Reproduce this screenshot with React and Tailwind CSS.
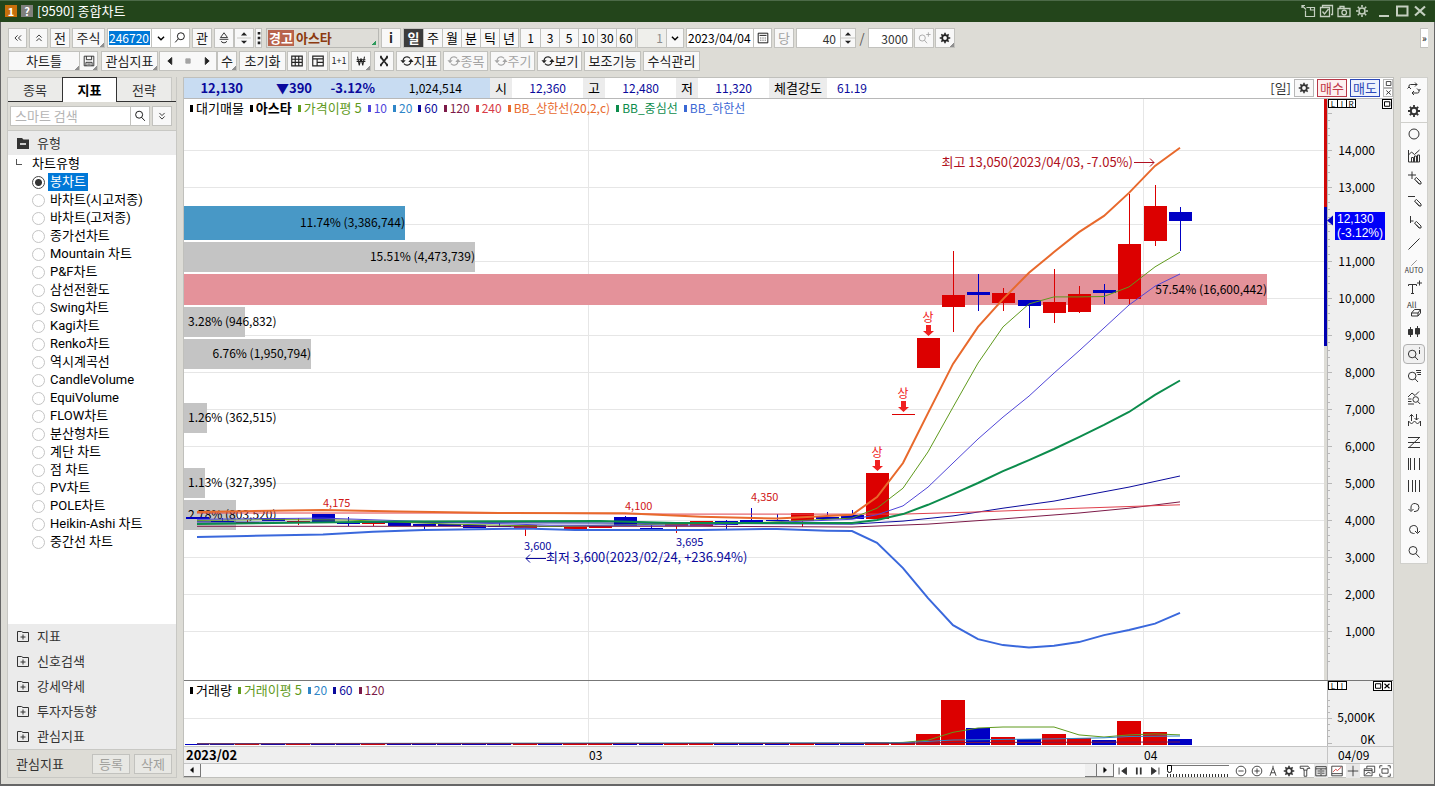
// 종합차트 화면 - 툴바, 지표 트리, 봉차트, 거래량 차트
import { useState } from 'react';

const PERIODS = ['일', '주', '월', '분', '틱', '년'];
const MINUTES = ['1', '3', '5', '10', '30', '60'];

const CHART_TYPES = [
  '봉차트', '바차트(시고저종)', '바차트(고저종)', '종가선차트', 'Mountain 차트', 'P&F차트', '삼선전환도',
  'Swing차트', 'Kagi차트', 'Renko차트', '역시계곡선', 'CandleVolume', 'EquiVolume', 'FLOW차트',
  '분산형차트', '계단 차트', '점 차트', 'PV차트', 'POLE차트', 'Heikin-Ashi 차트', '중간선 차트',
];

const SECTIONS = ['지표', '신호검색', '강세약세', '투자자동향', '관심지표'];

const PRICE_LEGEND = [
  { name: '대기매물', color: '#000000' },
  { name: '아스타', color: '#000000', bold: true },
  { name: '가격이평 5', color: '#5f9a1c' },
  { name: '10', color: '#4f46dc', num: true },
  { name: '20', color: '#2f86c8', num: true },
  { name: '60', color: '#0a0a9c', num: true },
  { name: '120', color: '#7c1a48', num: true },
  { name: '240', color: '#d83c48', num: true },
  { name: 'BB_상한선(20,2,c)', color: '#e8692c', num: true },
  { name: 'BB_중심선', color: '#0c8c4c', num: true },
  { name: 'BB_하한선', color: '#3a68d4', num: true },
];

const VOLUME_LEGEND = [
  { name: '거래량', color: '#000000' },
  { name: '거래이평 5', color: '#5f9a1c' },
  { name: '20', color: '#2f86c8', num: true },
  { name: '60', color: '#0a0a9c', num: true },
  { name: '120', color: '#7c1a48', num: true },
];

// [고가, 몸통 위, 몸통 아래, 저가, 상승 여부]
const CANDLES = [
  [4080, 4080, 4030, 4030, 0], [4060, 3980, 3950, 3950, 0], [4000, 3950, 3920, 3920, 1], [4050, 4050, 3970, 3970, 0],
  [4060, 3970, 3940, 3860, 1], [4175, 4160, 3930, 3930, 0], [4080, 3930, 3900, 3840, 0], [3930, 3930, 3890, 3840, 1],
  [3970, 3970, 3840, 3840, 0], [3890, 3890, 3850, 3760, 0], [3900, 3880, 3850, 3850, 0], [3870, 3870, 3790, 3790, 0],
  [3920, 3840, 3810, 3810, 0], [3860, 3860, 3780, 3560, 1], [3850, 3840, 3800, 3800, 0], [3810, 3810, 3750, 3750, 1],
  [3830, 3830, 3780, 3780, 1], [4100, 4090, 3830, 3830, 0], [3870, 3790, 3740, 3740, 0], [3950, 3890, 3830, 3650, 1],
  [3960, 3960, 3850, 3850, 1], [3990, 3980, 3860, 3740, 0], [4330, 4010, 3940, 3940, 0], [4160, 4010, 3970, 3970, 0],
  [4190, 4190, 3980, 3810, 1], [4220, 4080, 4030, 4030, 0], [4270, 4140, 4030, 4030, 0], [5270, 5270, 4030, 4030, 1],
  [6860, 6860, 6840, 6840, 1], [8920, 8920, 8110, 8110, 1], [11270, 10080, 9760, 9080, 1], [10650, 10160, 10080, 9650, 0],
  [10270, 10140, 9870, 9650, 1], [9950, 9950, 9780, 9190, 0], [10780, 9890, 9600, 9320, 1], [10320, 10110, 9620, 9590, 1],
  [10380, 10220, 10140, 9840, 0], [12810, 11460, 9970, 9810, 1], [13050, 12490, 11540, 11410, 1], [12460, 12320, 12080, 11270, 0],
];

// [봉 번호, 가격]
const LINES = [
  {
    color: '#0a0a9c', width: 1,
    points: [[0, 3950], [8, 3930], [16, 3920], [26, 3890], [28, 3970], [30, 4110], [32, 4320], [34, 4510], [37, 4890], [39, 5190]],
  },
  {
    color: '#7c1a48', width: 1,
    points: [[0, 3830], [20, 3830], [26, 3810], [29, 3890], [32, 4030], [35, 4190], [37, 4320], [39, 4490]],
  },
  {
    color: '#e0404c', width: 1,
    points: [[0, 4190], [10, 4190], [19, 4160], [28, 4160], [31, 4220], [35, 4320], [39, 4410]],
  },
  {
    color: '#5f9a1c', width: 1,
    points: [[0, 3990], [3, 4010], [6, 4000], [10, 3890], [14, 3830], [18, 3880], [22, 3920], [26, 4050], [27, 4320], [28, 4860], [29, 5840], [30, 7050], [31, 8240], [32, 9220], [33, 9840], [34, 10030], [35, 10030], [36, 10040], [37, 10300], [38, 10840], [39, 11240]],
  },
  {
    color: '#5046d8', width: 1,
    points: [[0, 4020], [5, 4050], [9, 3960], [14, 3860], [20, 3860], [26, 4020], [27, 4140], [28, 4380], [29, 4890], [30, 5540], [31, 6190], [32, 6780], [33, 7350], [34, 7970], [35, 8570], [36, 9190], [37, 9810], [38, 10320], [39, 10650]],
  },
  {
    color: '#0c8c4c', width: 2,
    points: [[0, 3890], [3, 3920], [8, 3960], [16, 3970], [19, 3920], [26, 3920], [27, 4000], [28, 4160], [29, 4410], [30, 4700], [31, 5000], [32, 5320], [33, 5620], [34, 5920], [35, 6240], [36, 6570], [37, 6920], [38, 7380], [39, 7770]],
  },
  {
    color: '#e8692c', width: 2,
    points: [[0, 4220], [5, 4270], [8, 4230], [12, 4190], [17, 4180], [20, 4090], [23, 4040], [25, 4110], [26, 4140], [27, 4620], [28, 5540], [29, 6890], [30, 8220], [31, 9220], [32, 9970], [33, 10680], [34, 11240], [35, 11780], [36, 12220], [37, 12840], [38, 13570], [39, 14060]],
  },
  {
    color: '#3a68dc', width: 2,
    points: [[0, 3540], [2, 3570], [5, 3610], [7, 3680], [9, 3730], [13, 3770], [15, 3730], [20, 3730], [23, 3760], [25, 3710], [26, 3700], [27, 3380], [28, 2700], [29, 1890], [30, 1160], [31, 780], [32, 620], [33, 550], [34, 600], [35, 700], [36, 890], [37, 1030], [38, 1200], [39, 1490]],
  },
];

// 매물대 막대
const PROFILE = [
  { y: 107, h: 34, w: 221, fill: '#4898c6', label: '11.74% (3,386,744)' },
  { y: 143, h: 30, w: 291, fill: '#c4c4c4', label: '15.51% (4,473,739)' },
  { y: 175, h: 31, w: 1083, fill: '#e4929a', label: '57.54% (16,600,442)' },
  { y: 208, h: 30, w: 61, fill: '#c4c4c4', label: '3.28% (946,832)' },
  { y: 240, h: 30, w: 127, fill: '#c4c4c4', label: '6.76% (1,950,794)' },
  { y: 304, h: 30, w: 23, fill: '#c4c4c4', label: '1.26% (362,515)' },
  { y: 369, h: 30, w: 21, fill: '#c4c4c4', label: '1.13% (327,395)' },
  { y: 401, h: 30, w: 52, fill: '#c4c4c4', label: '2.78% (803,520)' },
];

// 거래량 (단위: 천주)
const VOLUMES = [
  150, 260, 200, 180, 210, 400, 220, 180, 240, 160, 150, 170, 140, 260, 150, 140, 180, 420, 200, 220,
  190, 180, 420, 230, 380, 260, 350, 600, 560, 2000, 8500, 3300, 1500, 1100, 2000, 1300, 850, 4500, 2400, 1050,
];

const VOLUME_LINES = [
  { color: '#5f9a1c', points: [[0, 260], [27, 350], [28, 500], [29, 900], [30, 2400], [31, 3200], [32, 3400], [34, 3400], [35, 1900], [36, 1500], [37, 1900], [38, 2100], [39, 1900]] },
  { color: '#2f86c8', points: [[0, 260], [28, 420], [30, 950], [34, 1150], [36, 1350], [37, 1600], [39, 1700]] },
  { color: '#7c1a48', points: [[0, 220], [28, 300], [30, 480], [39, 560]] },
];

const UP = '#dc0000';
const DOWN = '#0000c4';

const xAt = (i) => Math.round(13 + 25.2 * i);
const yAt = (price) => 569 - price * 0.037;
const vAt = (k) => 64 - k * 0.0053;
const toPoints = (points, scale) => points.map(([i, v]) => `${xAt(i)},${scale(v).toFixed(1)}`).join(' ');

const GEAR = (
  <>
    <circle cx="8" cy="8" r="3.2" fill="none" strokeWidth="2" />
    <path d="M8 2v2.5M8 11.5V14M2 8h2.5M11.5 8H14M3.8 3.8l1.7 1.7M10.5 10.5l1.7 1.7M12.2 3.8l-1.7 1.7M5.5 10.5l-1.7 1.7" strokeWidth="1.8" />
  </>
);
const LENS = <path d="M11 6.5a4 4 0 1 1-8 0a4 4 0 0 1 8 0M9.8 9.5L13.5 13.5" />;
const PENCIL = <path d="M8.5 9l2-1.5l4.5 4.5v2h-2zM10 10.5l3.5 3.5" />;
const CYCLE = (
  <>
    <path d="M3.5 7.5a4.5 4.5 0 0 1 8-2.500M12.5 8.5a4.5 4.5 0 0 1-8 2.500" strokeWidth="1.3" />
    <path d="M.5 7h6l-3 3.500zM9.500 9h6l-3-3.500z" fill="currentColor" stroke="none" />
  </>
);

const ICONS = {
  gear: GEAR,
  lens: LENS,
  cycle: CYCLE,
  dblLeft: <path d="M7.5 5L4.5 8l3 3M11.5 5l-3 3l3 3" />,
  dblUp: <path d="M5 7.5l3-3l3 3M5 11.5l3-3l3 3" />,
  dblDown: <path d="M5 4.5l3 3l3-3M5 8.5l3 3l3-3" />,
  down: <path d="M4.5 6.5L8 10l3.5-3.5" strokeWidth="1.6" />,
  lensLeft: <path d="M13 6a4 4 0 1 1-8 0a4 4 0 0 1 8 0M6 9L2.5 13" />,
  lensPlus: <path d="M9.5 8a3.5 3.5 0 1 1-7 0a3.5 3.5 0 0 1 7 0M8.5 10.5l3 3.5M10.5 4h5M13 1.5v5" />,
  spin: <><path d="M0 8h16" stroke="#c2c2be" /><path d="M4.500 5L8 1.500L11.500 5zM4.500 11L8 14.500L11.500 11z" fill="currentColor" stroke="none" /></>,
  balloon: <path d="M8 2L4 7.5h8zM3 9.5h10M5 11.5a3 2 0 1 0 6 0" />,
  dots: <path d="M8 1v3M8 6.500v3M8 12v3" strokeWidth="3" />,
  save: <path d="M2.5 2.5h11v11h-11zM5 2.5v4h6v-4M4.5 13.5v-4h7v4M6 11.5h4" />,
  left: <path d="M10 4v8L5.5 8z" fill="currentColor" />,
  right: <path d="M6 4v8L10.5 8z" fill="currentColor" />,
  stop: <path d="M5.5 5.5h5v5h-5z" fill="currentColor" />,
  grid: <path d="M2 2.5h12v11H2zM2 6h12M2 9.5h12M6 2.5v11M10 2.5v11" strokeWidth="1.3" />,
  panes: <path d="M2 2.5h12v11H2zM2 5.5h12M7 5.5v8M7 9.5h7" strokeWidth="1.3" />,
  won: <path d="M4 3l2 10l2-8l2 8l2-10M3 6.5h10M3 8.5h10" strokeWidth="1.2" />,
  candleX: <path d="M4.5 2.5c0 3 7 8 7 11M11.5 2.5c0 3-7 8-7 11M4.5 2v3M11.5 2v3M4.5 11v3M11.5 11v3" strokeWidth="2" />,
  calendar: <path d="M2.5 2.5h11v11h-11zM4 5h8M5 8h1M7.5 8h1M10 8h1M5 10.5h1M7.5 10.5h1M10 10.5h1" />,
  detach: <path d="M6.5 4.5h8v9h-9v-6M10.5 4.5v2.5h4M2 5V2.5h3M2 2.5l4 4" strokeWidth="1.2" />,
  checks: <path d="M4.5 4V2.5h10v9H13M2.5 4.5h9v9h-9zM4.5 8.5l2 2.5l4-5" strokeWidth="1.3" />,
  camera: <path d="M2 5.5h12v8H2zM4 5.5V3.5h4v2M10.5 9.5a2.3 2.3 0 1 1-4.6 0a2.3 2.3 0 0 1 4.6 0" strokeWidth="1.3" />,
  sun: <path d="M11 8a3 3 0 1 1-6 0a3 3 0 0 1 6 0M8 2v2M8 12v2M2 8h2M12 8h2M3.8 3.8l1.4 1.4M10.8 10.8l1.4 1.4M12.2 3.8l-1.4 1.4M5.2 10.8l-1.4 1.4" strokeWidth="1.6" />,
  minus: <path d="M3 13h10" strokeWidth="2" />,
  square: <path d="M3 3.5h10.5v9H3z" strokeWidth="2" />,
  close: <path d="M3 3.5l10 9M13 3.5l-10 9" strokeWidth="2.2" />,
  folderMinus: <><path d="M2 3h5l1.5 1.5H14V14H2z" fill="currentColor" stroke="none" /><path d="M5 9h6" stroke="#fff" strokeWidth="1.5" /></>,
  folderPlus: <path d="M2.5 3.5h4l1.500 1h5.500v9h-11zM5.500 9h5M8 6.500v5" />,
  rotate: <path d="M3 7V5q0-1.500 1.500-1.500H11M9 1.500l2 2l-2 2M13 8.500v2q0 1.500-1.500 1.500H6M8 10l-2 2l2 2M1.500 7.500L3 6l2 2M14.500 8L13 9.500l-2-2" />,
  circle: <path d="M13 8a5 5 0 1 1-10 0a5 5 0 0 1 10 0" />,
  chartBars: <path d="M2.5 2v12h11M2.5 7l3-3l3 2.5l5-4.5M5.5 14V9.5h2V14M8.5 14V8h2v6M11.5 14V7h2v7" />,
  crossPen: <>{PENCIL}<path d="M2 5h8M6 1.5v7.500" /></>,
  barPen: <>{PENCIL}<path d="M2 4.5h7" /></>,
  stemPen: <>{PENCIL}<path d="M4.5 2v7M4.5 7h3" /></>,
  slash: <path d="M2.5 13.5l11-11" />,
  textPlus: <path d="M2.5 6V4.5h8V6M6.5 4.5v9M5 13.5h3M11 3h5M13.5.5v5" />,
  eraser: <path d="M5.5 11l3-3.5h6L12 11zM5.5 11v3H12v-3M12 14l2.5-3V7.5" />,
  candles: <path d="M4.5 3v10M11.5 2v11M2.5 5.5h4v5h-4zM9.5 4.5h4v5.5h-4z" fill="currentColor" />,
  lensInfo: <path d="M10 8a3.8 3.8 0 1 1-7.6 0a3.8 3.8 0 0 1 7.6 0M9 10.8l3 3.2M13.5 1.5v1M13.5 4v4" />,
  lensList: <path d="M10 8a3.8 3.8 0 1 1-7.6 0a3.8 3.8 0 0 1 7.6 0M9 10.8l3 3.2M10 2.5h5M10.5 4.5h4.5M11.5 6.5h3.5" />,
  waveLens: <path d="M2 7l4-4l3 2.5l4-4M2 9h3.5M2 11.5h3.5M2 14h6M12.5 9.5a2.8 2.8 0 1 1-5.6 0a2.8 2.8 0 0 1 5.6 0M11.7 11.5l2.5 2.5" />,
  zigArrows: <path d="M2.5 14V9l3 3l3-3l3 3l3-3v5M5.5 9V2.5M3.5 4.5l2-2l2 2M10.5 2v6M8.5 6l2 2l2-2" />,
  zLines: <path d="M2 3.5h12M2 13.5h12M2 8.5h12M13.5 3.500L3 13.500" />,
  barsA: <path d="M2.5 2v12M4.5 2v12M8.5 2v12M13.5 2v12" />,
  barsB: <path d="M2.5 2v12M6.5 2v12M9.5 2v12M13.5 2v12" />,
  undo: <path d="M5 10.5V7a4 4 0 1 1 4 4.5H8M2.5 9L5 11.5L7.5 9" />,
  redo: <path d="M11.5 10.5V7a4 4 0 1 0-4 4.5H8.5M9 9l2.5 2.5L14 9" />,
  first: <path d="M3.5 4v8M12 4v8L6.5 8z" fill="currentColor" />,
  pause: <path d="M5.5 4v8M10 4v8" strokeWidth="2" />,
  last: <path d="M12.5 4v8M4 4v8L9.5 8z" fill="currentColor" />,
  zoomOut: <path d="M13.5 8a5.5 5.5 0 1 1-11 0a5.5 5.5 0 0 1 11 0M5 8h6" />,
  zoomIn: <path d="M13.5 8a5.5 5.5 0 1 1-11 0a5.5 5.5 0 0 1 11 0M5 8h6M8 5v6" />,
  compass: <path d="M8 2v2M8 4L4.5 13.5M8 4l3.5 9.5M5.5 10h5" />,
  hammer: <path d="M2.5 2.5h9l2 2.5h-3v2h-4V5h-4zM7 7v7h3V7" />,
  tableIcon: <path d="M2 3h12v10.5H2zM2 5.5h12M4 8h3M4 10.5h3M9 8h3M9 10.5h3M8 5.5v8" />,
  chartRed: <><path d="M2 2.5h12v11H2zM2 11h12" /><path d="M3.5 9l3-3l2 1.5L13 3.5" stroke="#d03030" /></>,
  plus: <path d="M8 2v12M2 8h12" />,
  windows: <path d="M5.5 5V2.5h9v7H12M2.5 5.5h9v8h-9zM2.5 7.5h9M4 12l3-2.500l3 1" />,
  expand: <path d="M2 5V2h3M11 2h3v3M14 11v3h-3M5 14H2v-3M4.5 5.5h7v5h-7z" />,
};

function Icon({ name, className = 'size-4' }) {
  return (
    <svg viewBox="0 0 16 16" className={className} fill="none" stroke="currentColor" aria-hidden="true">
      {ICONS[name]}
    </svg>
  );
}

function Corner({ green }) {
  return (
    <span
      className={
        green
          ? 'absolute right-0.5 bottom-0.5 size-1 bg-[linear-gradient(135deg,transparent_50%,#2f9a5c_50%)]'
          : 'absolute right-0 bottom-0 size-1 bg-[linear-gradient(135deg,transparent_50%,#909090_50%)]'
      }
    />
  );
}

function ToolButton({ icon, label, children, className = 'w-5', corner, muted }) {
  return (
    <button
      aria-label={label}
      className={`relative flex h-5 shrink-0 items-center justify-center border border-[#c2c2be] bg-[#f8f8f8] whitespace-nowrap ${muted ? 'text-[#a4a4a4]' : 'text-[#222]'} ${className}`}
    >
      {icon && <Icon name={icon} className="size-3.5 shrink-0" />}
      {children}
      {corner && <Corner />}
    </button>
  );
}

function TitleBar() {
  return (
    <header className="flex h-[22px] items-center border-t border-[#4c6a48] bg-[#23451b] pr-[7px] pb-px pl-[5px] text-white">
      <span className="flex h-3 w-3 items-center justify-center bg-[#c8700c] text-[11px] leading-3 font-bold">1</span>
      <span className="ml-1 flex h-3 w-3 items-center justify-center bg-[#80807c] text-[11px] leading-3 font-bold">?</span>
      <h1 className="ml-1">[9590] 종합차트</h1>
      <div className="ml-auto flex items-center gap-0.5 text-[#c4cfc0]">
        <button aria-label="분리"><Icon name="detach" /></button>
        <button aria-label="선택"><Icon name="checks" /></button>
        <button aria-label="화면 캡처"><Icon name="camera" /></button>
        <button aria-label="설정"><Icon name="sun" /></button>
        <button aria-label="최소화" className="ml-1"><Icon name="minus" /></button>
        <button aria-label="최대화"><Icon name="square" /></button>
        <button aria-label="닫기"><Icon name="close" /></button>
      </div>
    </header>
  );
}

function CodeToolbar() {
  const [period, setPeriod] = useState('일');

  return (
    <div className="flex h-5 items-center">
      <div className="flex gap-0.5">
        <ToolButton icon="dblLeft" label="접기" className="w-[19px]" />
        <ToolButton icon="dblUp" label="위로" className="w-[19px]" />
        <ToolButton className="w-5">전</ToolButton>
        <ToolButton className="w-[33px]" corner>주식</ToolButton>
        <div className="flex h-5 w-[83px] border border-[#c2c2be] bg-white">
          <input
            aria-label="종목코드"
            defaultValue="246720"
            className="w-[43px] bg-[#0078d7] bg-clip-content px-px py-0.5 text-xs leading-[14px] text-white outline-none"
          />
          <button aria-label="종목 목록" className="flex w-[19px] items-center justify-center border-l border-[#c2c2be]"><Icon name="down" className="size-3.5" /></button>
          <button aria-label="종목 찾기" className="flex w-[19px] items-center justify-center border-l border-[#c2c2be]"><Icon name="lensLeft" className="size-3.5" /></button>
        </div>
        <ToolButton className="w-5">관</ToolButton>
        <ToolButton icon="balloon" label="알림" className="w-5" />
      </div>
      <ToolButton icon="spin" label="이전 다음" className="w-5" />
      <ToolButton icon="dots" label="더보기" className="ml-px w-[7px]" />
      <div className="relative ml-1 flex h-5 w-[113px] items-center border border-[#b8b8b4] bg-[#deddd8] font-bold">
        <span className="ml-px bg-[#b8634c] px-px leading-4 text-white">경고</span>
        <span className="ml-0.5 text-[#8c3a10]">아스타</span>
        <Corner green />
      </div>
      <ToolButton className="ml-0.5 w-5 font-bold">i</ToolButton>
      <div className="ml-0.5 flex border border-[#c2c2be]">
        {PERIODS.map((p) => (
          <button
            key={p}
            onClick={() => setPeriod(p)}
            className={
              period === p
                ? 'h-[18px] w-[19px] bg-[#3c3c3c] leading-[18px] font-bold text-white'
                : 'h-[18px] w-[19px] border-l border-[#c2c2be] bg-[#f8f8f8] leading-[18px]'
            }
          >
            {p}
          </button>
        ))}
      </div>
      <div className="ml-px flex border border-[#c2c2be]">
        {MINUTES.map((m) => (
          <button key={m} className="h-[18px] w-[19px] border-l border-[#c2c2be] bg-[#f8f8f8] text-xs leading-[18px] first:border-l-0">
            {m}
          </button>
        ))}
      </div>
      <div className="relative ml-px h-5 w-[47px]">
        <select aria-label="분 단위" className="h-5 w-full appearance-none border border-[#c2c2be] bg-[#efefeb] pr-5 text-right text-xs text-[#8c8c8c]">
          <option>1</option>
        </select>
        <span className="pointer-events-none absolute top-px right-px flex h-[18px] w-[17px] items-center justify-center border-l border-[#c2c2be] bg-[#f8f8f8]">
          <Icon name="down" className="size-3.5" />
        </span>
      </div>
      <div className="ml-0.5 flex h-5 w-[86px] border border-[#c2c2be] bg-white">
        <input aria-label="기준일" defaultValue="2023/04/04" className="w-[66px] pl-px text-xs outline-none" />
        <button aria-label="달력" className="flex w-[18px] items-center justify-center border-l border-[#c2c2be]"><Icon name="calendar" className="size-3.5" /></button>
      </div>
      <ToolButton className="ml-0.5 w-5" muted>당</ToolButton>
      <input aria-label="표시 봉수" defaultValue="40" className="ml-0.5 h-5 w-[45px] border border-[#c2c2be] bg-white pr-1 text-right text-xs text-[#333]" />
      <ToolButton icon="spin" label="봉수 조절" className="w-[15px] border-l-0" />
      <span className="w-3 text-center text-[#555]">/</span>
      <input aria-label="전체 봉수" defaultValue="3000" className="h-5 w-[45px] border border-[#c2c2be] bg-white pr-1 text-right text-xs text-[#333]" />
      <ToolButton icon="lensPlus" label="확대" className="ml-px w-5" muted />
      <ToolButton icon="gear" label="환경설정" className="ml-px w-5" corner />
      <button aria-label="더 펼치기" className="ml-auto flex h-5 w-2 items-center justify-center border border-r-0 border-[#c2c2be] bg-white text-[10px] leading-none">»</button>
    </div>
  );
}

function ChartToolbar() {
  return (
    <div className="mt-[3px] flex h-5 items-center">
      <ToolButton className="w-[72px]" corner>차트틀</ToolButton>
      <ToolButton icon="save" label="저장" className="w-[18px] border-l-0" corner />
      <ToolButton className="ml-[3px] w-[57px]" corner>관심지표</ToolButton>
      <ToolButton icon="left" label="이전" className="ml-px w-5 border-r-0" />
      <ToolButton icon="stop" label="정지" className="w-[18px] border-x-0" muted />
      <ToolButton icon="right" label="다음" className="w-5 border-l-0" />
      <ToolButton className="w-5" corner>수</ToolButton>
      <div className="ml-0.5 flex gap-px">
        <ToolButton className="w-[47px]">초기화</ToolButton>
        <ToolButton icon="grid" label="데이터표" className="w-5" />
        <ToolButton icon="panes" label="화면분할" className="w-5" />
        <ToolButton className="w-5 text-[9px]">1+1</ToolButton>
        <ToolButton icon="won" label="금액" className="ml-px w-5" corner />
      </div>
      <div className="ml-[3px] flex gap-0.5">
        <ToolButton icon="candleX" label="봉 비교" className="w-5" />
        <ToolButton icon="cycle" className="w-[45px]">지표</ToolButton>
        <ToolButton icon="cycle" className="w-[45px]" muted>종목</ToolButton>
        <ToolButton icon="cycle" className="w-[45px]" muted>주기</ToolButton>
        <ToolButton icon="cycle" className="w-[45px]">보기</ToolButton>
        <ToolButton className="w-[57px]">보조기능</ToolButton>
        <ToolButton className="w-[57px]">수식관리</ToolButton>
      </div>
    </div>
  );
}

function Sidebar() {
  return (
    <aside className="flex w-[170px] shrink-0 flex-col border-x border-[#c8c8c4]">
      <div role="tablist" className="flex h-[25px] border-b border-[#333] text-[#333]">
        <button role="tab" className="w-[54px] border-t border-[#c8c8c4] bg-[#ebebe9]">종목</button>
        <button role="tab" aria-selected="true" className="-mb-px w-[55px] border border-b-0 border-[#333] bg-white font-bold text-black">지표</button>
        <button role="tab" className="w-[55px] border-t border-r border-[#c8c8c4] bg-[#ebebe9]">전략</button>
      </div>
      <div className="flex h-[28px] items-center gap-0.5 pr-1 pl-0.5">
        <div className="flex h-5 flex-1 border border-[#c2c2be] bg-white">
          <input aria-label="스마트 검색" placeholder="스마트 검색" className="w-0 flex-1 pl-1 placeholder:text-[#b4b4b4] outline-none" />
          <button aria-label="검색" className="flex w-[19px] items-center justify-center border-l border-[#c2c2be]"><Icon name="lens" className="size-3.5" /></button>
        </div>
        <ToolButton icon="dblDown" label="검색 옵션" />
      </div>
      <button className="flex h-[25px] shrink-0 items-center gap-1.5 border-t border-[#c8c8c4] bg-[#ebebeb] pb-px pl-[7px] text-[#333]">
        <Icon name="folderMinus" />
        유형
      </button>
      <div className="flex-1 bg-white pb-2 font-['Roboto','Noto_Sans_CJK_KR',sans-serif]">
        <div className="flex h-[18px] items-center pl-2">
          <span className="mb-1 h-1.5 w-1.5 border-b border-l border-[#555]" />
          <span className="ml-2.5">차트유형</span>
        </div>
        {CHART_TYPES.map((type, i) => (
          <label key={type} className="flex h-[18px] items-center gap-[3px] pl-6">
            <input
              type="radio"
              name="chartType"
              defaultChecked={i === 0}
              className="peer size-[13px] shrink-0 appearance-none rounded-full border border-[#c4c4c4] bg-white checked:border-[#444] checked:bg-[radial-gradient(circle,#333_3px,transparent_4px)]"
            />
            <span className="px-0.5 peer-checked:bg-[#0078d7] peer-checked:text-white">{type}</span>
          </label>
        ))}
      </div>
      {SECTIONS.map((name) => (
        <button key={name} className="flex h-[25px] shrink-0 items-center gap-1.5 bg-[#ebebeb] pb-px pl-[7px] text-[#333]">
          <Icon name="folderPlus" />
          {name}
        </button>
      ))}
      <div className="flex h-[29px] items-center gap-1 border-y border-[#c8c8c4] bg-[#dddcd6] pr-1 pl-2 text-[#333]">
        <span className="mr-auto">관심지표</span>
        <button className="h-5 w-[38px] border border-[#c2c2be] bg-[#e8e8e4] leading-[18px] text-[#a0a09c]">등록</button>
        <button className="h-5 w-[38px] border border-[#c2c2be] bg-[#e8e8e4] leading-[18px] text-[#a0a09c]">삭제</button>
      </div>
    </aside>
  );
}

function QuoteBar() {
  return (
    <div className="flex h-[21px] items-center border-b border-[#b8b8b8] bg-white text-xs text-[#0a0a9c]">
      <div className="flex h-full items-center bg-[#c8dcf2] pr-7 text-right font-bold">
        <span className="w-[59px] text-[13px]">12,130</span>
        <span className="w-[69px] text-[13px]">▼390</span>
        <span className="w-[63px] text-[13px]">-3.12%</span>
        <span className="w-[87px] font-normal text-black">1,024,514</span>
      </div>
      <span className="h-full w-[22px] bg-[#ececec] text-center text-[13px] leading-5 text-black">시</span>
      <span className="w-[71px] pr-[17px] text-right">12,360</span>
      <span className="h-full w-[22px] bg-[#ececec] text-center text-[13px] leading-5 text-black">고</span>
      <span className="w-[71px] pr-[17px] text-right">12,480</span>
      <span className="h-full w-[22px] bg-[#ececec] text-center text-[13px] leading-5 text-black">저</span>
      <span className="w-[71px] pr-[17px] text-right">11,320</span>
      <span className="h-full w-[58px] bg-[#ececec] text-center text-[13px] leading-5 text-black">체결강도</span>
      <span className="ml-2.5">61.19</span>
      <div className="ml-auto flex items-center gap-[3px] text-[13px]">
        <span className="text-[#333]">[일]</span>
        <button aria-label="차트 설정" className="flex h-[18px] w-5 items-center justify-center border border-[#b8b8b8] bg-[#f8f8f8] text-[#333]"><Icon name="gear" className="size-3.5" /></button>
        <button className="h-[18px] w-[30px] border border-[#b83848] bg-[#fdf0f0] leading-4 text-[#c03848]">매수</button>
        <button className="h-[18px] w-[30px] border border-[#2c48b8] bg-[#eef2fd] leading-4 text-[#2c48b8]">매도</button>
        <div className="flex w-[10px] flex-col text-[#333]">
          <button aria-label="차트 최대화" className="flex h-[9px] items-center justify-center border border-[#b8b8b8]"><Icon name="square" className="size-[7px]" /></button>
          <button aria-label="차트 닫기" className="flex h-[9px] items-center justify-center border border-[#b8b8b8]"><Icon name="close" className="size-[7px]" /></button>
        </div>
      </div>
    </div>
  );
}

function Legend({ items }) {
  return (
    <ul className="absolute top-px left-1.5 flex gap-1.5 leading-4">
      {items.map((item) => (
        <li key={item.name} className={item.num ? 'flex items-center gap-[3px] text-xs leading-4' : 'flex items-center gap-[3px]'} style={{ color: item.color }}>
          <span className="h-[7px] w-[3px] bg-current" />
          <span className={item.bold ? 'font-bold' : ''}>{item.name}</span>
        </li>
      ))}
    </ul>
  );
}

function PaneButtons({ names, icons }) {
  return (
    <div className="absolute top-0 right-px flex w-[64px] items-start text-[8px] leading-[7px]">
      {names.map((n) => (
        <button key={n} className="-mr-px h-[9px] w-[10px] border border-black bg-white">{n}</button>
      ))}
      <div className="ml-auto flex">
        {icons.map((n) => (
          <button key={n} aria-label={n} className="-ml-px flex size-[10px] items-center justify-center border border-black bg-white"><Icon name={n} className="size-2" /></button>
        ))}
      </div>
    </div>
  );
}

function LimitMark({ i, y }) {
  const x = xAt(i);
  return (
    <g fill="#f02020">
      <text x={x} y={y} fontSize="12" textAnchor="middle">상</text>
      <path d={`M${x - 2} ${y + 3}h5v6h3l-5.5 5l-5.5-5h3z`} />
    </g>
  );
}

function PriceChart() {
  const ticks = Array.from({ length: 75 }, (_, i) => 200 + i * 200);
  const thousands = Array.from({ length: 14 }, (_, i) => (i + 1) * 1000);

  return (
    <div className="relative border-b border-[#777]">
      <svg viewBox="0 0 1209 581" className="block h-auto w-full" role="img" aria-label="아스타 봉차트">
        <rect width="1140" height="581" fill="#fff" />
        <g stroke="#e6e6e6" shapeRendering="crispEdges">
          {thousands.map((p) => <path key={p} d={`M0 ${Math.round(yAt(p)) + 0.5}H1140`} />)}
          <path d="M404.5 0V581M959.5 0V581" />
        </g>
        {PROFILE.map((b) => <rect key={b.label} y={b.y} width={b.w} height={b.h} fill={b.fill} />)}

        <g fontSize="12">
          {PROFILE.map((b) => (
            <text key={b.label} x={b.w > 100 ? b.w : 4} y={b.y + Math.round(b.h / 2) + 4} textAnchor={b.w > 100 ? 'end' : 'start'}>{b.label}</text>
          ))}
        </g>
        <g shapeRendering="crispEdges">
          {CANDLES.map(([high, top, bottom, low, up], i) => (
            <g key={i} fill={up ? UP : DOWN}>
              <rect x={xAt(i)} y={yAt(high)} width="1" height={Math.max(1, yAt(low) - yAt(high))} />
              <rect x={xAt(i) - 11} y={yAt(top)} width="23" height={Math.max(1, yAt(bottom) - yAt(top))} />
            </g>
          ))}
        </g>
        {LINES.map((line) => (
          <polyline key={line.color} points={toPoints(line.points, yAt)} fill="none" stroke={line.color} strokeWidth={line.width} />
        ))}

        <LimitMark i={27} y={358} />
        <LimitMark i={28} y={299} />
        <LimitMark i={29} y={223} />

        <g fontSize="11" fill="#d01818">
          <text x="139" y="408">4,175</text>
          <text x="441" y="411">4,100</text>
          <text x="567" y="402">4,350</text>
        </g>
        <g fontSize="11" fill="#0a0a9c">
          <text x="340" y="451">3,600</text>
          <text x="492" y="447">3,695</text>
        </g>
        <g fontSize="13">
          <text x="949" y="68" textAnchor="end" fill="#b01020">최고 13,050(2023/04/03, -7.05%)</text>
          <text x="362" y="463" fill="#0a0a9c">최저 3,600(2023/02/24, +236.94%)</text>
        </g>
        <path d="M950 63.5h20M966 59.5l4 4l-4 4" fill="none" stroke="#b01020" />
        <path d="M362 459.5h-20M346 455.5l-4 4l4 4" fill="none" stroke="#0a0a9c" />

        <rect x="1140" width="3" height="108" fill="#d00808" />
        <rect x="1140" y="108" width="3" height="139" fill="#0000b0" />
        <rect x="1143" width="66" height="581" fill="#efefef" />
        <g stroke="#b8b8b8" shapeRendering="crispEdges">
          <path d="M1143.5 0V581" />
          {ticks.map((p) => <path key={p} d={`M1144 ${Math.round(yAt(p)) + 0.5}h${p % 1000 ? 2 : 4}`} />)}
        </g>
        <g fontSize="12" textAnchor="end">
          {thousands.filter((p) => p !== 12000).map((p) => (
            <text key={p} x="1191" y={Math.round(yAt(p)) + 5}>{p.toLocaleString('en-US')}</text>
          ))}
        </g>
        <path d="M1143 121.5l6-5v10z" fill="#0000c4" />
        <rect x="1151" y="113" width="50" height="28" fill="#0000f8" />
        <g fontSize="12" fontFamily="'Liberation Sans', sans-serif" fill="#fff">
          <text x="1153" y="124">12,130</text>
          <text x="1153" y="138">(-3.12%)</text>
        </g>
      </svg>
      <Legend items={PRICE_LEGEND} />
      <PaneButtons names={['L', 'I', 'R']} icons={['square']} />
    </div>
  );
}

function VolumeChart() {
  return (
    <div className="relative">
      <svg viewBox="0 0 1209 65" className="block h-auto w-full" role="img" aria-label="거래량 차트">
        <rect width="1143" height="65" fill="#fff" />
        <path d="M0 37.5H1143M404.5 0V65M959.5 0V65" stroke="#e6e6e6" shapeRendering="crispEdges" />
        <g shapeRendering="crispEdges">
          {VOLUMES.map((v, i) => (
            <rect key={i} x={xAt(i) - 12} y={vAt(v)} width="24" height={Math.max(1, 64 - vAt(v))} fill={CANDLES[i][4] ? UP : DOWN} />
          ))}
        </g>
        {VOLUME_LINES.map((line) => (
          <polyline key={line.color} points={toPoints(line.points, vAt)} fill="none" stroke={line.color} />
        ))}
        <rect x="1143" width="66" height="65" fill="#efefef" />
        <path d="M1143.5 0V65M1144 19.5h2M1144 25.5h2M1144 31.5h2M1144 37.5h4M1144 43.5h2M1144 49.5h2M1144 55.5h2M1144 62.5h4" stroke="#b8b8b8" shapeRendering="crispEdges" />
        <g fontSize="12" textAnchor="end">
          <text x="1191" y="41">5,000K</text>
          <text x="1191" y="63">0K</text>
        </g>
      </svg>
      <Legend items={VOLUME_LEGEND} />
      <PaneButtons names={['L', 'I']} icons={['square', 'close']} />
    </div>
  );
}

function DateAxis() {
  return (
    <div className="grid h-[17px] grid-cols-[404fr_555fr_184fr_66fr] border-t border-[#c4c4c4] bg-[#efefef] text-xs leading-4">
      <span className="pl-0.5 text-[13px] leading-[15px] font-bold">2023/02</span>
      <span className="pl-px">03</span>
      <span className="pl-px">04</span>
      <span className="border-l border-[#c4c4c4] pl-2.5">04/09</span>
    </div>
  );
}

function ScrollRow() {
  return (
    <div className="flex h-[14px] items-center border-t border-[#c4c4c4] bg-white text-[#333]">
      <button aria-label="왼쪽으로" className="flex h-[13px] w-[17px] items-center justify-center border-r border-b border-[#777] bg-[#f4f4f4] text-black"><Icon name="left" className="size-2.5" /></button>
      <div className="flex h-[13px] flex-1 justify-end bg-[#f7f7f7]">
        <span className="h-[13px] w-3 border-r border-b border-[#777] bg-[#efefef]" />
      </div>
      <button aria-label="오른쪽으로" className="flex h-[13px] w-[17px] items-center justify-center border-r border-b border-[#777] bg-[#f4f4f4] text-black"><Icon name="right" className="size-2.5" /></button>
      <div className="ml-0.5 flex gap-0.5">
        <button aria-label="처음"><Icon name="first" className="size-3.5" /></button>
        <button aria-label="일시정지"><Icon name="pause" className="size-3.5" /></button>
        <button aria-label="마지막"><Icon name="last" className="size-3.5" /></button>
      </div>
      <input
        type="range"
        aria-label="봉 간격"
        defaultValue="0"
        className="mx-[5px] h-3 w-[62px] appearance-none border-t border-[#777] bg-[repeating-linear-gradient(90deg,#333_0_1px,transparent_1px_3px)] bg-[length:100%_3px] bg-bottom bg-no-repeat [&::-webkit-slider-thumb]:mb-1 [&::-webkit-slider-thumb]:h-2 [&::-webkit-slider-thumb]:w-[5px] [&::-webkit-slider-thumb]:appearance-none [&::-webkit-slider-thumb]:rounded-b-sm [&::-webkit-slider-thumb]:border [&::-webkit-slider-thumb]:border-black [&::-webkit-slider-thumb]:bg-white"
      />
      <div className="flex gap-0.5 pr-px">
        <button aria-label="축소"><Icon name="zoomOut" className="size-3.5" /></button>
        <button aria-label="확대"><Icon name="zoomIn" className="size-3.5" /></button>
        <button aria-label="자동"><Icon name="compass" className="size-3.5" /></button>
        <button aria-label="설정"><Icon name="gear" className="size-3.5" /></button>
        <button aria-label="도구"><Icon name="hammer" className="size-3.5" /></button>
        <button aria-label="데이터 창" className="bg-[#e8e8e8]"><Icon name="tableIcon" className="size-3.5" /></button>
        <button aria-label="차트 표시"><Icon name="chartRed" className="size-3.5" /></button>
        <button aria-label="십자선" className="bg-[#e8e8e8]"><Icon name="plus" className="size-3.5" /></button>
        <button aria-label="새 창"><Icon name="windows" className="size-3.5" /></button>
        <button aria-label="전체화면"><Icon name="expand" className="size-3.5" /></button>
      </div>
    </div>
  );
}

const DRAW_TOOLS = [
  ['circle', '원'], ['chartBars', '차트'], ['crossPen', '십자 그리기'], ['barPen', '수평선'], ['stemPen', '수직선'],
  ['slash', '추세선'], ['auto', '자동 추세선'], ['textPlus', '텍스트'], ['eraser', '전체 지우기'], ['candles', '봉'],
  ['lensInfo', '정보'], ['lensList', '목록'], ['waveLens', '패턴'], ['zigArrows', '전환'], ['zLines', '지그재그'],
  ['barsA', '피보나치 시간'], ['barsB', '등간격'], ['undo', '되돌리기'], ['redo', '다시하기'], ['lens', '돋보기'],
];

function DrawTool({ name, label }) {
  if (name === 'auto') {
    return (
      <button aria-label={label} className="flex h-[22px] flex-col items-center justify-center">
        <Icon name="slash" className="size-2" />
        <span className="text-[7px] leading-[7px]">AUTO</span>
      </button>
    );
  }
  if (name === 'eraser') {
    return (
      <button aria-label={label} className="relative flex h-[22px] items-center justify-center">
        <span className="absolute top-0.5 left-1.5 text-[8px] leading-[8px]">All</span>
        <Icon name={name} />
      </button>
    );
  }
  return (
    <button
      aria-label={label}
      className={
        name === 'lensInfo'
          ? 'mx-0.5 my-px flex h-5 items-center justify-center rounded border border-[#b0b0b0] bg-[#f0f0f0]'
          : 'flex h-[22px] items-center justify-center'
      }
    >
      <Icon name={name} />
    </button>
  );
}

function DrawToolbar() {
  return (
    <nav aria-label="그리기 도구" className="flex w-7 shrink-0 flex-col self-start border border-[#d0d0cc] bg-[#fafafa] text-[#333]">
      <DrawTool name="rotate" label="새로고침" />
      <DrawTool name="gear" label="도구 설정" />
      <div className="border-t border-[#d0d0cc]" />
      {DRAW_TOOLS.map(([name, label]) => <DrawTool key={name} name={name} label={label} />)}
    </nav>
  );
}

function App() {
  return (
    <div className="flex min-h-screen flex-col bg-[#dddcd6] font-['Noto_Sans_CJK_KR',sans-serif] text-[13px] leading-[18px] text-black">
      <TitleBar />
      <div className="flex flex-1 flex-col border-x border-b-2 border-[#666] pt-1.5 pb-1.5">
        <div className="pr-1.5 pl-[7px]">
          <CodeToolbar />
          <ChartToolbar />
        </div>
        <main className="mt-1.5 flex flex-1 items-start gap-1.5 pr-1.5 pl-1.5">
          <div className="flex min-w-0 flex-1 gap-1.5">
            <Sidebar />
            <section className="min-w-0 flex-1 border border-[#c0c0bc]">
              <QuoteBar />
              <PriceChart />
              <VolumeChart />
              <DateAxis />
              <ScrollRow />
            </section>
          </div>
          <DrawToolbar />
        </main>
      </div>
    </div>
  );
}

export default App;
